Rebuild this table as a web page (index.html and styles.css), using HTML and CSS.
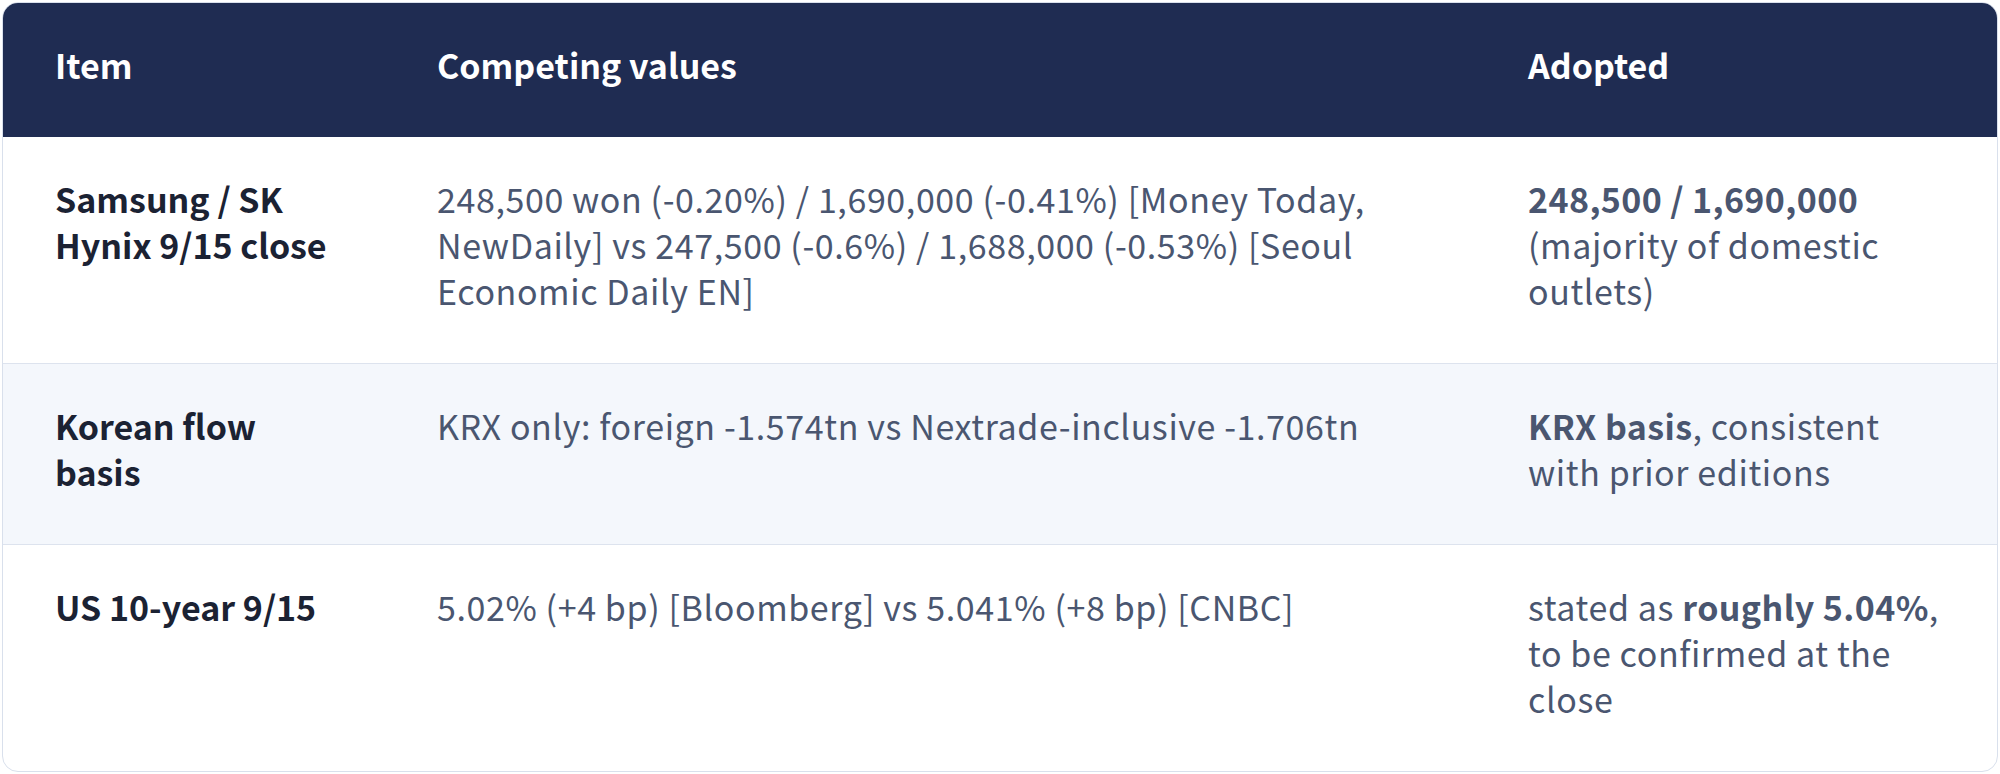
FILE: index.html
```html
<!DOCTYPE html>
<html lang="en">
<head>
<meta charset="utf-8">
<link rel="stylesheet" href="styles.css">
</head>
<body>
<div class="card">
  <table class="grid">
    <colgroup>
      <col class="c1">
      <col class="c2">
      <col class="c3">
    </colgroup>
    <thead>
      <tr>
        <th>Item</th>
        <th>Competing values</th>
        <th>Adopted</th>
      </tr>
    </thead>
    <tbody>
      <tr>
        <td class="item">Samsung / SK Hynix 9/15 close</td>
        <td class="val">248,500 won (-0.20%) / 1,690,000 (-0.41%) [Money Today, NewDaily] vs 247,500 (-0.6%) / 1,688,000 (-0.53%) [Seoul Economic Daily EN]</td>
        <td class="val"><strong>248,500 / 1,690,000</strong> (majority of domestic outlets)</td>
      </tr>
      <tr class="alt">
        <td class="item">Korean flow basis</td>
        <td class="val">KRX only: foreign -1.574tn vs Nextrade-inclusive -1.706tn</td>
        <td class="val"><strong>KRX basis</strong>, consistent with prior editions</td>
      </tr>
      <tr>
        <td class="item">US 10-year 9/15</td>
        <td class="val">5.02% (+4 bp) [Bloomberg] vs 5.041% (+8 bp) [CNBC]</td>
        <td class="val">stated as <strong>roughly 5.04%</strong>, to be confirmed at the close</td>
      </tr>
    </tbody>
  </table>
</div>
</body>
</html>
```
FILE: styles.css
```css
html, body {
  margin: 0;
  padding: 0;
  background: #ffffff;
}
body {
  padding: 2px;
  font-family: "Noto Sans CJK KR", "Noto Sans", sans-serif;
}
.card {
  border: 1px solid #d9e0ec;
  border-radius: 16px;
  overflow: hidden;
  background: #ffffff;
}
.grid {
  width: 100%;
  border-collapse: collapse;
  table-layout: fixed;
}
.c1 { width: 382px; }
.c2 { width: 1091px; }
.c3 { width: auto; }
th, td {
  text-align: left;
  vertical-align: top;
  padding: 39px 52px 49px;
  font-size: 34px;
  line-height: 46px;
}
th {
  background: #1f2c52;
  color: #ffffff;
  font-weight: 700;
}
tbody tr {
  border-bottom: 1px solid #dde3ee;
}
tbody tr:last-child {
  border-bottom: none;
}
tr.alt td {
  background: #f4f7fc;
}
.item {
  color: #1b2233;
  font-weight: 700;
}
.val {
  color: #4a5670;
  letter-spacing: 0.6px;
}
.val strong {
  font-weight: 700;
  letter-spacing: 0.4px;
}
```
